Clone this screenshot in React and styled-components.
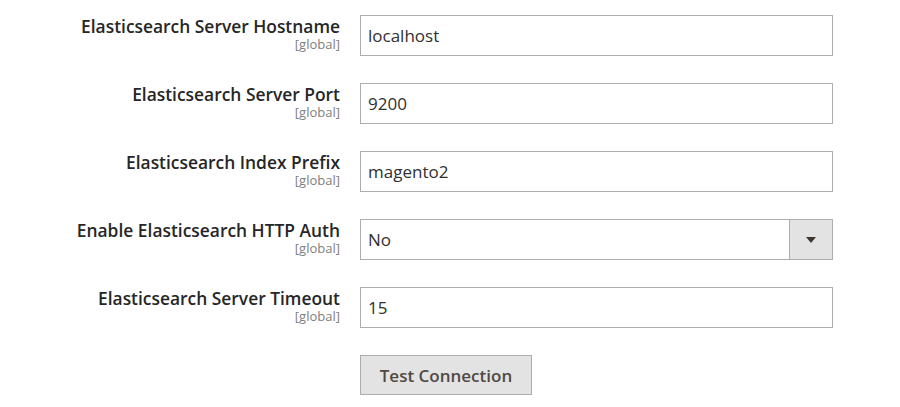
import React from "react";
import styled, { createGlobalStyle } from "styled-components";

const GlobalStyle = createGlobalStyle`
  body {
    margin: 0;
    background: #fff;
    font-family: "Open Sans", "Liberation Sans", sans-serif;
    color: #303030;
  }
`;

const Form = styled.div`
  padding-top: 15px;
  width: 900px;
`;

const Row = styled.div`
  display: grid;
  grid-template-columns: 340px 473px;
  column-gap: 20px;
  margin-bottom: 27px;
`;

const Label = styled.div`
  text-align: right;
`;

const LabelText = styled.div`
  font-size: 17.4px;
  font-weight: 600;
  line-height: 22px;
  color: #262626;
`;

const Scope = styled.div`
  font-size: 13px;
  line-height: 14px;
  color: #808080;
`;

const Input = styled.input`
  box-sizing: border-box;
  width: 100%;
  height: 41px;
  border: 1px solid #adadad;
  padding: 0 7px;
  font-family: inherit;
  font-size: 17px;
  color: #303030;
  outline: none;
`;

const Select = styled.div`
  box-sizing: border-box;
  display: flex;
  height: 41px;
  border: 1px solid #adadad;
`;

const SelectValue = styled.div`
  flex: 1;
  display: flex;
  align-items: center;
  padding: 0 7px;
  font-size: 17px;
`;

const SelectArrow = styled.div`
  width: 42px;
  border-left: 1px solid #adadad;
  background: #e3e3e3;
  display: flex;
  align-items: center;
  justify-content: center;
  &::after {
    content: "";
    border-left: 5px solid transparent;
    border-right: 5px solid transparent;
    border-top: 6px solid #41362f;
  }
`;

const Actions = styled.div`
  padding-left: 360px;
  margin-top: 1px;
`;

const Button = styled.button`
  box-sizing: border-box;
  width: 172px;
  height: 40px;
  background: #e3e3e3;
  border: 1px solid #adadad;
  font-family: inherit;
  font-size: 17px;
  font-weight: 600;
  color: #514943;
`;

const fields = [
  { label: "Elasticsearch Server Hostname", value: "localhost" },
  { label: "Elasticsearch Server Port", value: "9200" },
  { label: "Elasticsearch Index Prefix", value: "magento2" },
  { label: "Enable Elasticsearch HTTP Auth", value: "No", select: true },
  { label: "Elasticsearch Server Timeout", value: "15" },
];

export default function App() {
  return (
    <>
      <GlobalStyle />
      <Form>
        {fields.map((f) => (
          <Row key={f.label}>
            <Label>
              <LabelText>{f.label}</LabelText>
              <Scope>[global]</Scope>
            </Label>
            {f.select ? (
              <Select>
                <SelectValue>{f.value}</SelectValue>
                <SelectArrow />
              </Select>
            ) : (
              <Input defaultValue={f.value} />
            )}
          </Row>
        ))}
        <Actions>
          <Button>Test Connection</Button>
        </Actions>
      </Form>
    </>
  );
}
